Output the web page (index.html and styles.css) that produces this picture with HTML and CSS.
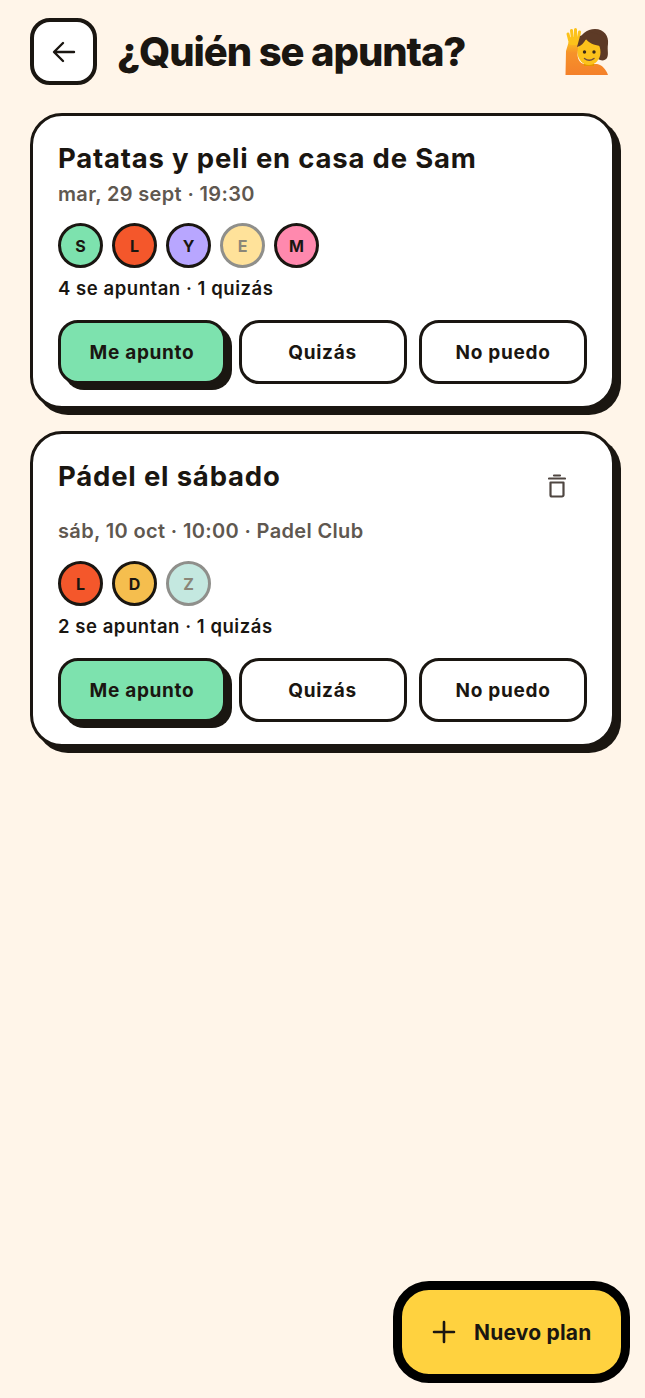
FILE: index.html
```html
<!DOCTYPE html>
<html lang="es">
<head>
  <meta charset="UTF-8">
  <meta name="viewport" content="width=device-width, initial-scale=1.0">
  <title>¿Quién se apunta?</title>
  <link rel="stylesheet" href="styles.css">
</head>
<body>
  <div class="screen">
    <header class="header">
      <button class="back-btn" aria-label="Volver">
        <svg width="28" height="28" viewBox="0 0 28 28" fill="none" stroke="#1a1611" stroke-width="2.4" stroke-linecap="round" stroke-linejoin="round">
          <path d="M24 14H4.5M13 5l-9 9 9 9"/>
        </svg>
      </button>
      <h1 class="page-title">¿Quién se apunta?</h1>
      <svg class="emoji" width="48" height="50" viewBox="0 0 48 50">
        <defs>
          <linearGradient id="arm" x1="0" y1="0" x2="0" y2="1">
            <stop offset="0" stop-color="#fcc21b"/>
            <stop offset="0.35" stop-color="#f6922a"/>
            <stop offset="1" stop-color="#f4802a"/>
          </linearGradient>
        </defs>
        <path d="M1.500 48L2 24L5 14H15L13.500 28C14 33 16 36 20 37H33C38 38 42 42 44 48Z" fill="url(#arm)"/>
        <g fill="none" stroke="#fcc21b" stroke-width="3" stroke-linecap="round">
          <path d="M5.500 13L4 7M8.500 12L7.500 3.500M11.500 12V2.500M14 13L15.500 5"/>
        </g>
        <rect x="4.500" y="10" width="11" height="8" rx="3" fill="#fcc21b"/>
        <path d="M15 18C15 7 23 2 31 2C40 2 45 9 44 17C43 23 45 27 43 31C41 34 37 34 34 32L20 24Z" fill="#5d3a26"/>
        <rect x="20" y="33" width="10" height="6" fill="#e59600"/>
        <ellipse cx="25" cy="25" rx="11.500" ry="13" fill="#fcc21b"/>
        <path d="M13 20C17 19 20 16 22 12C25 16 30 18 36 19L38 25L42 10L28 5L16 9Z" fill="#5d3a26"/>
        <circle cx="20.500" cy="25" r="1.700" fill="#3a2a1a"/>
        <circle cx="30" cy="25" r="1.700" fill="#3a2a1a"/>
        <path d="M20.500 31.500c3 2.200 6.500 2.200 9.500 0" fill="none" stroke="#6d4c41" stroke-width="1.400" stroke-linecap="round"/>
      </svg>
    </header>

    <main class="plans">
      <section class="card">
        <div class="card-top">
          <h2 class="card-title">Patatas y peli en casa de Sam</h2>
        </div>
        <p class="card-date">mar, 29 sept · 19:30</p>
        <div class="avatars">
          <span class="avatar green">S</span>
          <span class="avatar red">L</span>
          <span class="avatar purple">Y</span>
          <span class="avatar cream maybe">E</span>
          <span class="avatar pink">M</span>
        </div>
        <p class="card-stats">4 se apuntan · 1 quizás</p>
        <div class="actions">
          <button class="action active">Me apunto</button>
          <button class="action">Quizás</button>
          <button class="action">No puedo</button>
        </div>
      </section>

      <section class="card">
        <div class="card-top">
          <h2 class="card-title">Pádel el sábado</h2>
          <button class="trash-btn" aria-label="Borrar">
            <svg width="18" height="24" viewBox="0 0 18 24" fill="none" stroke="#4f4641" stroke-width="2.200" stroke-linejoin="round" stroke-linecap="round">
              <path d="M1 4.500h16M6 1.500h6"/>
              <path d="M2.500 8.500h13v12.500a1.500 1.500 0 0 1-1.500 1.500h-10a1.500 1.500 0 0 1-1.500-1.500z"/>
            </svg>
          </button>
        </div>
        <p class="card-date">sáb, 10 oct · 10:00 · Padel Club</p>
        <div class="avatars">
          <span class="avatar red">L</span>
          <span class="avatar amber">D</span>
          <span class="avatar mint maybe">Z</span>
        </div>
        <p class="card-stats">2 se apuntan · 1 quizás</p>
        <div class="actions">
          <button class="action active">Me apunto</button>
          <button class="action">Quizás</button>
          <button class="action">No puedo</button>
        </div>
      </section>
    </main>

    <button class="fab">
      <svg width="24" height="24" viewBox="0 0 24 24" fill="none" stroke="#1a1611" stroke-width="2.600" stroke-linecap="round">
        <path d="M12 2v20M2 12h20"/>
      </svg>
      <span>Nuevo plan</span>
    </button>
  </div>
</body>
</html>
```

FILE: styles.css
```css
* {
  box-sizing: border-box;
}
body {
  font-family: Inter, "Liberation Sans", sans-serif;
  margin: 0;
  padding: 0;
  background-color: #fff5e9;
  color: #1a1611;
}
button {
  font-family: inherit;
  color: inherit;
  cursor: pointer;
}
p, h1, h2 {
  margin: 0;
}
.screen {
  position: relative;
  height: 1398px;
  overflow: hidden;
}
.header {
  display: flex;
  align-items: center;
  padding: 18px 33px 0 30px;
}
.back-btn {
  display: flex;
  align-items: center;
  justify-content: center;
  width: 67px;
  height: 67px;
  padding: 0;
  background: #ffffff;
  border: 4px solid #1a1611;
  border-radius: 20px;
}
.page-title {
  flex: 1;
  margin-left: 20px;
  font-size: 40px;
  line-height: 67px;
  font-weight: 800;
  letter-spacing: -1.1px;
}
.plans {
  display: flex;
  flex-direction: column;
  gap: 22px;
  padding: 28px 30px 0 30px;
}
.card {
  padding: 25px 25px 22px 25px;
  background: #ffffff;
  border: 3px solid #1a1611;
  border-radius: 32px;
  box-shadow: 6px 6px 0 #1a1611;
}
.card-top {
  display: flex;
  justify-content: space-between;
  align-items: flex-start;
}
.card-title {
  font-size: 27.5px;
  line-height: 34px;
  font-weight: 700;
  letter-spacing: 0.8px;
}
.trash-btn {
  display: flex;
  align-items: center;
  justify-content: center;
  width: 60px;
  height: 53px;
  padding: 0;
  background: none;
  border: 0;
}
.card-date {
  margin-top: 7px;
  font-size: 20px;
  line-height: 24px;
  font-weight: 600;
  letter-spacing: 0.35px;
  color: #5f5850;
}
.avatars {
  display: flex;
  gap: 9px;
  margin-top: 17px;
}
.card-top:has(.trash-btn) ~ .avatars {
  margin-top: 18px;
}
.avatar {
  display: flex;
  align-items: center;
  justify-content: center;
  width: 45px;
  height: 45px;
  border: 3px solid #1a1611;
  border-radius: 50%;
  font-size: 16px;
  font-weight: 700;
}
.avatar.maybe {
  border-color: #8f8f8b;
  color: #8a8678;
}
.green { background: #7de2ae; }
.red { background: #f4572b; }
.purple { background: #b8a6ff; }
.cream { background: #ffe29a; }
.pink { background: #ff89ae; }
.amber { background: #f5be4e; }
.mint { background: #c4e8e0; }
.card-stats {
  margin-top: 8px;
  font-size: 18.5px;
  line-height: 24px;
  font-weight: 600;
  letter-spacing: 0.55px;
}
.actions {
  display: flex;
  gap: 12.5px;
  margin-top: 20px;
}
.action {
  flex: 1;
  height: 64px;
  padding: 0;
  background: #ffffff;
  border: 3px solid #1a1611;
  border-radius: 20px;
  font-size: 19px;
  font-weight: 700;
  letter-spacing: 0.7px;
}
.action.active {
  background: #7de2ae;
  box-shadow: 6px 6px 0 #1a1611;
}
.fab {
  position: absolute;
  left: 393px;
  top: 1281px;
  display: flex;
  align-items: center;
  gap: 18px;
  width: 237px;
  height: 102px;
  padding: 0 0 0 30px;
  background: #ffd23f;
  border: 9px solid #000000;
  border-radius: 36px;
  font-size: 21px;
  font-weight: 700;
  letter-spacing: 0.2px;
}
```
